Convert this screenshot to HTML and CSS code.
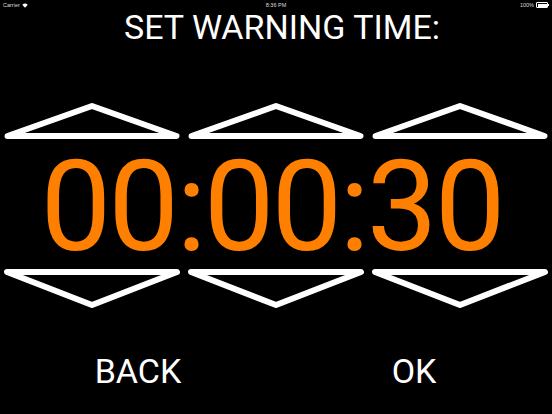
FILE: index.html
```html
<!DOCTYPE html>
<html>
<head>
<meta charset="utf-8">
<link rel="stylesheet" href="styles.css">
</head>
<body>
<div class="screen">
  <div class="status">
    <div class="status-left">Carrier
      <svg class="wifi" width="6" height="5" viewBox="0 0 12 10"><path d="M6 9.5 L0.5 3.5 A8 8 0 0 1 11.5 3.5 Z" fill="#fff"/></svg>
    </div>
    <div class="status-mid">8:36 PM</div>
    <div class="status-right">100%
      <span class="battery"><span class="battery-fill"></span></span><span class="battery-tip"></span>
    </div>
  </div>

  <h1 class="title">SET WARNING TIME:</h1>

  <div class="arrows arrows-up">
    <svg class="arrow" width="184" height="40" viewBox="0 0 184 40"><polygon points="7.5,36 92,6 176.5,36" /></svg>
    <svg class="arrow" width="184" height="40" viewBox="0 0 184 40"><polygon points="7.5,36 92,6 176.5,36" /></svg>
    <svg class="arrow" width="184" height="40" viewBox="0 0 184 40"><polygon points="7.5,36 92,6 176.5,36" /></svg>
  </div>

  <div class="clock">00:00:30</div>

  <div class="arrows arrows-down">
    <svg class="arrow" width="184" height="44" viewBox="0 0 184 44"><polygon points="7,5 92,38 177,5" /></svg>
    <svg class="arrow" width="184" height="44" viewBox="0 0 184 44"><polygon points="7,5 92,38 177,5" /></svg>
    <svg class="arrow" width="184" height="44" viewBox="0 0 184 44"><polygon points="7,5 92,38 177,5" /></svg>
  </div>

  <div class="actions">
    <div class="action">BACK</div>
    <div class="action">OK</div>
  </div>
</div>
</body>
</html>
```
FILE: styles.css
```css
html, body {
  margin: 0;
  padding: 0;
  background: #000;
}

.screen {
  width: 552px;
  height: 414px;
  background: #000;
  color: #fff;
  font-family: Roboto, "Liberation Sans", sans-serif;
  display: flex;
  flex-direction: column;
  overflow: hidden;
}

/* iOS status bar */
.status {
  height: 10px;
  display: flex;
  justify-content: space-between;
  align-items: center;
  padding: 0 3px;
  font-family: "Liberation Sans", Arial, sans-serif;
  font-size: 5.5px;
  color: #ddd;
  position: relative;
}

.status-left,
.status-right {
  display: flex;
  align-items: center;
  gap: 2px;
}

.status-mid {
  position: absolute;
  left: 0;
  right: 0;
  text-align: center;
}

.wifi {
  display: block;
}

.battery {
  display: block;
  width: 9px;
  height: 3px;
  border: 0.5px solid #fff;
  border-radius: 1px;
  padding: 0.5px;
}

.battery-fill {
  display: block;
  width: 100%;
  height: 100%;
  background: #fff;
}

.battery-tip {
  display: block;
  width: 1px;
  height: 2px;
  background: #fff;
  margin-left: -2px;
}

.title {
  margin: 0;
  padding-left: 12px;
  font-weight: 400;
  font-size: 34px;
  line-height: 34px;
  text-align: center;
}

.arrows {
  display: flex;
}

.arrows-up {
  margin-top: 56px;
}

.arrow {
  display: block;
  flex: 0 0 184px;
}

.arrow polygon {
  fill: none;
  stroke: #fff;
  stroke-width: 6;
  stroke-linejoin: round;
}

.clock {
  margin-top: 7px;
  padding-right: 9px;
  font-size: 126px;
  line-height: 120px;
  letter-spacing: -3px;
  text-align: center;
  color: #ff8000;
}

.actions {
  margin-top: 43px;
  display: grid;
  grid-template-columns: 1fr 1fr;
}

.action {
  font-size: 34px;
  line-height: 34px;
  text-align: center;
}
```
